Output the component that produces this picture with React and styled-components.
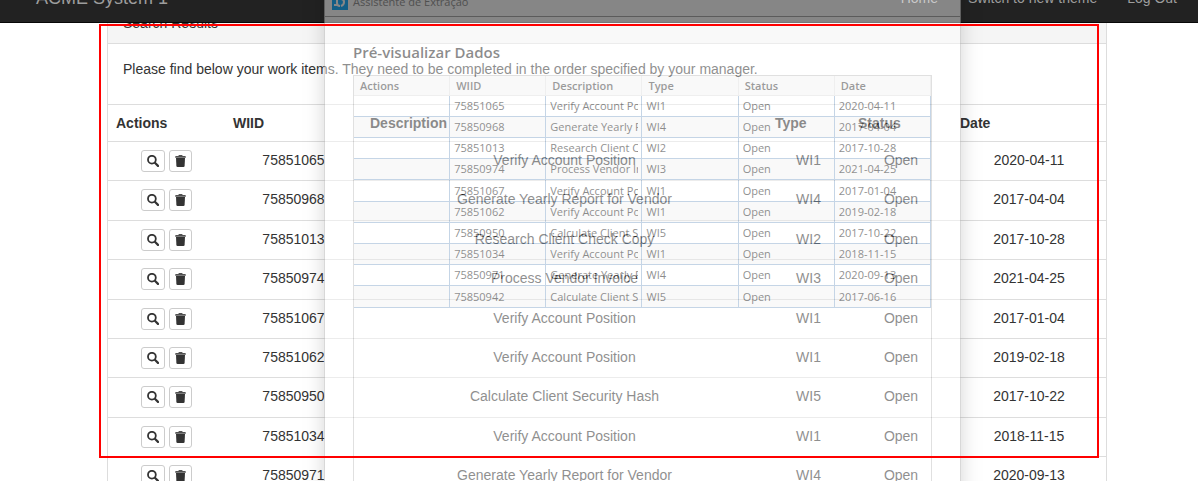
import React from "react";
import styled, { createGlobalStyle } from "styled-components";

const GlobalStyle = createGlobalStyle`
  *, *::before, *::after { box-sizing: border-box; }
  html, body { margin: 0; background: #fff; }
  body {
    color: #333;
    font: 14px/20px "Liberation Sans", Arial, sans-serif;
    overflow: hidden;
  }
  table { border-collapse: separate; border-spacing: 0; table-layout: fixed; width: 100%; }
`;

const Page = styled.div`
  position: relative;
  height: 100vh;
  overflow: hidden;
`;

const NavBar = styled.header`
  position: relative;
  z-index: 1;
  display: flex;
  align-items: center;
  justify-content: space-between;
  height: 50px;
  margin-top: -27px;
  padding: 0 6px 0 21px;
  background: #222;
  border-bottom: 1px solid #080808;
`;

const NavLinks = styled.nav`
  display: flex;
`;

const NavLink = styled.a`
  padding: 15px;
  color: #9d9d9d;
  font-size: ${(p) => (p.$brand ? 18 : 14)}px;
  text-decoration: none;
`;

const Main = styled.main`
  padding: 0 91px 0 107px;
  margin-top: -21px;
`;

const Panel = styled.section`
  border: 1px solid #ddd;
`;

const PanelHeading = styled.h1`
  margin: 0;
  padding: 10px 15px;
  font-size: 14px;
  font-weight: 400;
  line-height: 20px;
  background: #f5f5f5;
  border-bottom: 1px solid #ddd;
`;

const PanelText = styled.p`
  margin: 0;
  padding: 15px 15px 25px;
`;

const WorkTable = styled.table`
  th, td {
    padding: 8px;
    border-top: 1px solid #ddd;
    vertical-align: top;
    text-align: center;
    white-space: nowrap;
  }
  th { text-align: left; }
  tbody tr { height: 39px; }
  tbody tr:nth-child(5n + 2), tbody tr:nth-child(5n + 4) { height: 40px; }
`;

const Actions = styled.div`
  display: flex;
  justify-content: center;
  gap: 4px;
`;

const IconButton = styled.button`
  display: flex;
  align-items: center;
  justify-content: center;
  padding: 0 5px;
  height: 22px;
  color: #333;
  background: #fff;
  border: 1px solid #ccc;
  border-radius: 3px;
`;

const Preview = styled.aside`
  position: absolute;
  z-index: 2;
  top: -14px;
  bottom: -40px;
  left: 324px;
  width: 637px;
  background: #fff;
  opacity: 0.45;
  border: 1px solid #aaa;
  box-shadow: 0 0 18px rgba(0, 0, 0, 0.36);
  font: 11px/16px "Open Sans", "Noto Sans", sans-serif;
  color: #000;
`;

const TitleBar = styled.div`
  display: flex;
  align-items: center;
  gap: 5px;
  height: 30px;
  padding-left: 7px;
  color: #888;
  border-bottom: 1px solid #a0a0a0;
`;

const PreviewBody = styled.div`
  padding: 25px 28px 0;
`;

const PreviewTitle = styled.h2`
  margin: 0;
  padding-bottom: 13px;
  font-size: 15px;
  font-weight: 600;
  line-height: 20px;
`;

const PreviewFrame = styled.div`
  height: 500px;
  border: 1px solid #bbb;
`;

const PreviewTable = styled.table`
  th, td {
    padding: 0 3px 0 4px;
    text-align: left;
    font-weight: 400;
    white-space: nowrap;
    overflow: hidden;
    border-right: 1px solid #7fa3c9;
    border-bottom: 1px solid #7fa3c9;
  }
  th {
    height: 20px;
    padding-left: 6px;
    font-weight: 600;
    color: #222;
    background: #f2f2f2;
    border-color: #ddd;
  }
  tbody tr { height: 21px; }
  tbody tr:nth-child(5n) { height: 22px; }
  tbody tr:nth-child(even) { background: #f3f3f3; }
`;

const CellText = styled.div`
  overflow: hidden;
`;

const Highlight = styled.div`
  position: absolute;
  z-index: 3;
  top: 24px;
  left: 99px;
  right: 99px;
  height: 434px;
  border: 2px solid #f00;
  pointer-events: none;
`;

const SearchIcon = () => (
  <svg width="12" height="12" viewBox="0 0 12 12" fill="none" stroke="currentColor" aria-hidden="true">
    <circle cx="4.9" cy="4.7" r="3.9" strokeWidth="1.8" />
    <path d="M7.9 7.8 11 10.9" strokeWidth="2.2" strokeLinecap="round" />
  </svg>
);

const TrashIcon = () => (
  <svg width="11" height="12" viewBox="0 0 11 12" fill="currentColor" aria-hidden="true">
    <path d="M3.5 1V.5Q3.5 0 4 0h3q.5 0 .5.5V1H10q.8 0 .8.7v1H.2v-1Q.2 1 1 1z" opacity="0.85" />
    <path d="M1 3.1h9l-.4 7.8q-.1 1.1-1.1 1.1h-6q-1 0-1.1-1.1z" />
  </svg>
);

const AppIcon = () => (
  <svg width="16" height="16" viewBox="0 0 16 16" aria-hidden="true">
    <rect width="16" height="16" fill="#00a8ff" />
    <path d="M5 5v4q0 3 3 3M8 5h1q3 0 3 3t-3 4M2 11h3" fill="none" stroke="#fff" strokeWidth="2" />
  </svg>
);

const columns = ["Actions", "WIID", "Description", "Type", "Status", "Date"];

const items = [
  ["75851065", "Verify Account Position", "WI1", "Open", "2020-04-11"],
  ["75850968", "Generate Yearly Report for Vendor", "WI4", "Open", "2017-04-04"],
  ["75851013", "Research Client Check Copy", "WI2", "Open", "2017-10-28"],
  ["75850974", "Process Vendor Invoice", "WI3", "Open", "2021-04-25"],
  ["75851067", "Verify Account Position", "WI1", "Open", "2017-01-04"],
  ["75851062", "Verify Account Position", "WI1", "Open", "2019-02-18"],
  ["75850950", "Calculate Client Security Hash", "WI5", "Open", "2017-10-22"],
  ["75851034", "Verify Account Position", "WI1", "Open", "2018-11-15"],
  ["75850971", "Generate Yearly Report for Vendor", "WI4", "Open", "2020-09-13"],
  ["75850942", "Calculate Client Security Hash", "WI5", "Open", "2017-06-16"],
];

const HeadRow = () => (
  <thead>
    <tr>
      {columns.map((name) => (
        <th key={name} scope="col">{name}</th>
      ))}
    </tr>
  </thead>
);

export default function App() {
  return (
    <Page>
      <GlobalStyle />
      <NavBar>
        <NavLink href="#" $brand>ACME System 1</NavLink>
        <NavLinks>
          <NavLink href="#">Home</NavLink>
          <NavLink href="#">Switch to new theme</NavLink>
          <NavLink href="#">Log Out</NavLink>
        </NavLinks>
      </NavBar>
      <Main>
        <Panel>
          <PanelHeading>Search Results</PanelHeading>
          <PanelText>
            Please find below your work items. They need to be completed in the order specified by your manager.
          </PanelText>
          <WorkTable>
            <colgroup>
              <col width="117" />
              <col width="137" />
              <col />
              <col width="83" />
              <col width="102" />
              <col width="154" />
            </colgroup>
            <HeadRow />
            <tbody>
              {items.map((item) => (
                <tr key={item[0]}>
                  <td>
                    <Actions>
                      <IconButton type="button" aria-label={`View ${item[0]}`}><SearchIcon /></IconButton>
                      <IconButton type="button" aria-label={`Delete ${item[0]}`}><TrashIcon /></IconButton>
                    </Actions>
                  </td>
                  {item.map((value, i) => <td key={i}>{value}</td>)}
                </tr>
              ))}
            </tbody>
          </WorkTable>
        </Panel>
      </Main>
      <Preview>
        <TitleBar>
          <AppIcon />
          Assistente de Extração
        </TitleBar>
        <PreviewBody>
          <PreviewTitle>Pré-visualizar Dados</PreviewTitle>
          <PreviewFrame>
            <PreviewTable>
              <HeadRow />
              <tbody>
                {items.map((item) => (
                  <tr key={item[0]}>
                    <td />
                    {item.map((value, i) => (
                      <td key={i}><CellText>{value}</CellText></td>
                    ))}
                  </tr>
                ))}
              </tbody>
            </PreviewTable>
          </PreviewFrame>
        </PreviewBody>
      </Preview>
      <Highlight />
    </Page>
  );
}
